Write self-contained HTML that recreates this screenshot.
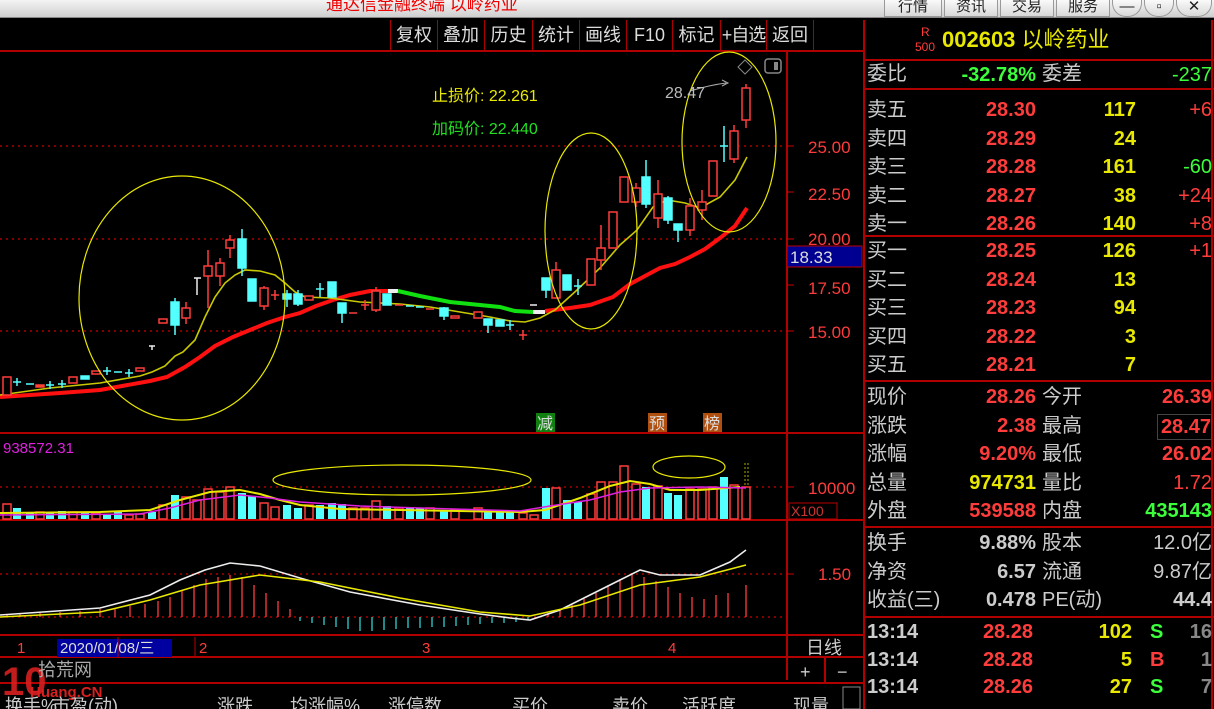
<!DOCTYPE html>
<html style="width:1214px;height:709px;overflow:hidden"><head><meta charset="utf-8"><style>
*{margin:0;padding:0;box-sizing:border-box}
html,body{width:1214px;height:709px;overflow:hidden}
body{background:#000;position:relative;font-family:"Liberation Sans","Noto Sans CJK SC",sans-serif}
.t{position:absolute;white-space:nowrap;line-height:1}
#title{position:absolute;left:0;top:0;width:1214px;height:18px;background:linear-gradient(#f4f4f4,#cfcfcf);border-bottom:1px solid #888}
.tb{position:absolute;top:0;height:17px;border:1px solid #999;border-top:none;background:linear-gradient(#fafafa,#d8d8d8);font-size:15px;color:#222;text-align:center;line-height:14px;overflow:hidden}
.btn{position:absolute;top:20px;height:30px;color:#ddd;font-size:18px;line-height:30px;text-align:center;border-left:1px solid #a00}
.r{color:#ff3c3c}.y{color:#e8e800}.g{color:#3cff3c}.w{color:#ccc}
.rp{position:absolute;font-size:20px;line-height:1}
</style></head><body>
<div id="title"><div class="t" style="left:326px;top:-4px;font-size:17px;color:#e00">通达信金融终端 以岭药业</div>
<div class="tb" style="left:884px;width:58px">行情</div><div class="tb" style="left:944px;width:54px">资讯</div><div class="tb" style="left:1000px;width:54px">交易</div><div class="tb" style="left:1056px;width:54px">服务</div>
<div class="tb" style="left:1112px;width:30px;border-radius:0 0 14px 14px">—</div><div class="tb" style="left:1144px;width:30px;border-radius:0 0 14px 14px">▫</div><div class="tb" style="left:1176px;width:36px;border-radius:0 0 14px 14px">✕</div></div>
<div class="btn" style="left:390px;width:47px">复权</div><div class="btn" style="left:437px;width:47px">叠加</div><div class="btn" style="left:484px;width:48px">历史</div><div class="btn" style="left:532px;width:47px">统计</div><div class="btn" style="left:579px;width:47px">画线</div><div class="btn" style="left:626px;width:46px">F10</div><div class="btn" style="left:672px;width:48px">标记</div><div class="btn" style="left:720px;width:46px;letter-spacing:-1px">+自选</div><div class="btn" style="left:766px;width:48px;border-right:1px solid #a00">返回</div>

<svg style="position:absolute;left:0;top:0" width="1214" height="709">
<g stroke="#b00000" stroke-width="2" fill="none">
<line x1="0" y1="51" x2="865" y2="51"/><line x1="864" y1="20" x2="864" y2="709"/>
<line x1="787" y1="51" x2="787" y2="680"/>
<line x1="0" y1="433" x2="865" y2="433"/><line x1="0" y1="520" x2="865" y2="520"/><line x1="787" y1="520" x2="787" y2="635"/>
<line x1="0" y1="635" x2="865" y2="635"/><line x1="0" y1="657" x2="865" y2="657"/><line x1="0" y1="683" x2="865" y2="683"/>
<line x1="825" y1="657" x2="825" y2="683"/>
<line x1="865" y1="60" x2="1214" y2="60"/><line x1="865" y1="89" x2="1214" y2="89"/><line x1="865" y1="236" x2="1214" y2="236"/><line x1="865" y1="381" x2="1214" y2="381"/><line x1="865" y1="527" x2="1214" y2="527"/><line x1="865" y1="617" x2="1214" y2="617"/>
<line x1="1212" y1="20" x2="1212" y2="709"/>
</g>
<g stroke="#c00" stroke-width="1.3" stroke-dasharray="2,4">
<line x1="0" y1="146" x2="787" y2="146"/><line x1="0" y1="239" x2="787" y2="239"/><line x1="0" y1="331" x2="787" y2="331"/><line x1="0" y1="487" x2="787" y2="487"/><line x1="0" y1="574" x2="787" y2="574"/><line x1="0" y1="617" x2="787" y2="617"/>
</g>
<g stroke="#c00" stroke-width="1"><line x1="787" y1="146" x2="794" y2="146"/><line x1="787" y1="192" x2="794" y2="192"/><line x1="787" y1="239" x2="794" y2="239"/><line x1="787" y1="285" x2="794" y2="285"/><line x1="787" y1="331" x2="794" y2="331"/><line x1="787" y1="487" x2="794" y2="487"/><line x1="787" y1="574" x2="794" y2="574"/></g>
<g fill="#ff3c3c" font-size="17" font-family="Liberation Sans,sans-serif"><text x="808" y="153">25.00</text><text x="808" y="200">22.50</text><text x="808" y="245">20.00</text><text x="808" y="294">17.50</text><text x="808" y="338">15.00</text><text x="808" y="494">10000</text><text x="818" y="580">1.50</text></g>
<rect x="789" y="503" width="48" height="16" fill="none" stroke="#b00" stroke-width="1"/><text x="791" y="516" fill="#c33" font-size="14" font-family="Liberation Sans">X100</text>
<rect x="787" y="246" width="75" height="21" fill="#000090" stroke="#b00"/><text x="790" y="263" fill="#ddd" font-size="17" font-family="Liberation Sans">18.33</text>

<polyline fill="none" stroke="#ff1010" stroke-width="4" points="0,397 60,393 100,390 150,381 167,377 185,367 200,357 215,346 233,337 250,330 267,323 285,317 300,313 316,306 333,300 350,295 370,291 388,291"/>
<polyline fill="none" stroke="#eee" stroke-width="4" points="388,291 398,291"/>
<polyline fill="none" stroke="#10e010" stroke-width="4" points="398,291 420,296 450,302 480,305 500,307 515,311 533,312"/>
<polyline fill="none" stroke="#eee" stroke-width="4" points="533,312 545,312"/>
<polyline fill="none" stroke="#ff1010" stroke-width="4" points="545,311 570,308 590,305 613,297 630,284 645,276 660,268 675,264 690,257 705,249 720,238 735,226 747,208"/>
<polyline fill="none" stroke="#c8c800" stroke-width="1.6" points="0,395 50,388 100,383 140,376 152,372 165,366 175,356 183,352 195,340 205,317 215,297 225,283 235,275 245,270 260,271 275,275 285,283 295,292 305,297 330,298 360,302 400,304 430,307 460,312 490,317 510,321 525,322 540,318 555,310 577,290 600,268 620,245 637,230 653,207 667,200 685,203 700,208 720,197 735,180 747,157"/>

<g stroke="#ff3c3c" stroke-width="1.5" fill="#000">
<rect x="3" y="377" width="8" height="18"/><rect x="36" y="385" width="8" height="2" fill="#f60"/><rect x="69" y="377" width="8" height="6"/><rect x="92" y="371" width="8" height="3"/><rect x="136" y="368" width="8" height="3"/><rect x="159" y="319" width="8" height="4"/>
<line x1="186" y1="302" x2="186" y2="324"/><rect x="182" y="308" width="8" height="10"/>
<line x1="208" y1="250" x2="208" y2="308"/><rect x="204" y="266" width="8" height="10"/>
<line x1="220" y1="258" x2="220" y2="286"/><rect x="216" y="263" width="8" height="13"/>
<line x1="230" y1="235" x2="230" y2="258"/><rect x="226" y="240" width="8" height="8"/>
<line x1="264" y1="286" x2="264" y2="310"/><rect x="260" y="288" width="8" height="18"/>
<line x1="271" y1="295" x2="279" y2="295"/><line x1="275" y1="290" x2="275" y2="300"/>
<rect x="305" y="296" width="8" height="4"/><line x1="349" y1="313" x2="357" y2="313"/><line x1="361" y1="305" x2="369" y2="305"/><line x1="365" y1="300" x2="365" y2="310"/>
<line x1="376" y1="287" x2="376" y2="312"/><rect x="372" y="291" width="8" height="19"/>
<line x1="395" y1="305" x2="403" y2="305"/><line x1="426" y1="309" x2="434" y2="309"/><rect x="451" y="316" width="8" height="2"/><rect x="474" y="312" width="8" height="6"/>
<line x1="519" y1="335" x2="527" y2="335"/><line x1="523" y1="330" x2="523" y2="340"/>
<line x1="556" y1="262" x2="556" y2="298"/><rect x="552" y="270" width="8" height="28"/>
<rect x="587" y="259" width="8" height="26"/><line x1="601" y1="225" x2="601" y2="270"/><rect x="597" y="248" width="8" height="12"/>
<rect x="609" y="212" width="8" height="36"/><rect x="620" y="177" width="8" height="25"/>
<line x1="636" y1="183" x2="636" y2="207"/><rect x="632" y="188" width="8" height="14"/>
<line x1="658" y1="180" x2="658" y2="228"/><rect x="654" y="194" width="8" height="24"/>
<line x1="690" y1="198" x2="690" y2="236"/><rect x="686" y="206" width="8" height="24"/>
<line x1="702" y1="190" x2="702" y2="220"/><rect x="698" y="202" width="8" height="8"/>
<rect x="709" y="161" width="8" height="35"/>
<line x1="734" y1="125" x2="734" y2="163"/><rect x="730" y="131" width="8" height="28"/>
<line x1="746" y1="84" x2="746" y2="128"/><rect x="742" y="88" width="8" height="32"/>
</g>
<g stroke="#54ffff" stroke-width="1.5" fill="#54ffff">
<line x1="13" y1="382" x2="21" y2="382"/><line x1="17" y1="378" x2="17" y2="386"/><line x1="26" y1="384" x2="34" y2="384"/><line x1="46" y1="385" x2="54" y2="385"/><line x1="50" y1="381" x2="50" y2="389"/><line x1="58" y1="384" x2="66" y2="384"/><line x1="62" y1="380" x2="62" y2="388"/>
<rect x="81" y="376" width="8" height="3"/><line x1="103" y1="371" x2="111" y2="371"/><line x1="107" y1="367" x2="107" y2="375"/><line x1="114" y1="372" x2="122" y2="372"/><line x1="125" y1="373" x2="133" y2="373"/><line x1="129" y1="369" x2="129" y2="377"/>
<line x1="175" y1="298" x2="175" y2="335"/><rect x="171" y="302" width="8" height="23"/>
<line x1="242" y1="229" x2="242" y2="276"/><rect x="238" y="239" width="8" height="29"/>
<rect x="248" y="279" width="8" height="22"/>
<line x1="287" y1="290" x2="287" y2="307"/><rect x="283" y="294" width="8" height="5"/>
<line x1="298" y1="290" x2="298" y2="306"/><rect x="294" y="294" width="8" height="10"/>
<line x1="316" y1="289" x2="324" y2="289"/><line x1="320" y1="283" x2="320" y2="297"/>
<rect x="328" y="282" width="8" height="15"/><line x1="342" y1="303" x2="342" y2="323"/><rect x="338" y="303" width="8" height="10"/>
<rect x="383" y="294" width="8" height="11"/><line x1="406" y1="306" x2="414" y2="306"/><line x1="416" y1="307" x2="424" y2="307"/>
<line x1="444" y1="307" x2="444" y2="320"/><rect x="440" y="308" width="8" height="8"/>
<line x1="488" y1="319" x2="488" y2="333"/><rect x="484" y="319" width="8" height="6"/><rect x="496" y="320" width="8" height="6"/><line x1="506" y1="325" x2="514" y2="325"/><line x1="510" y1="320" x2="510" y2="330"/>
<line x1="546" y1="278" x2="546" y2="298"/><rect x="542" y="278" width="8" height="12"/>
<rect x="563" y="275" width="8" height="15"/><line x1="574" y1="286" x2="582" y2="286"/><line x1="578" y1="279" x2="578" y2="295"/>
<line x1="646" y1="160" x2="646" y2="208"/><rect x="642" y="177" width="8" height="27"/>
<line x1="668" y1="196" x2="668" y2="224"/><rect x="664" y="198" width="8" height="22"/>
<line x1="678" y1="224" x2="678" y2="242"/><rect x="674" y="224" width="8" height="6"/>
<line x1="720" y1="146" x2="728" y2="146"/><line x1="724" y1="126" x2="724" y2="162"/>
</g>
<g stroke="#eee" stroke-width="1.5"><line x1="149" y1="346" x2="155" y2="346"/><line x1="152" y1="346" x2="152" y2="350"/><line x1="194" y1="278" x2="201" y2="278"/><line x1="197" y1="278" x2="197" y2="295"/><line x1="530" y1="305" x2="537" y2="305"/></g>

<g fill="none" stroke="#e8e800" stroke-width="1.2">
<ellipse cx="182" cy="298" rx="103" ry="122"/><ellipse cx="591" cy="231" rx="46" ry="98"/><ellipse cx="729" cy="142" rx="47" ry="90"/>
<ellipse cx="402" cy="480" rx="129" ry="15"/><ellipse cx="689" cy="467" rx="36" ry="11"/>
</g>
<path d="M745 60 l7 7 -7 7 -7 -7z" fill="none" stroke="#888"/><rect x="765" y="59" width="16" height="14" rx="3" fill="none" stroke="#888" stroke-width="1.5"/><rect x="774" y="62" width="4" height="8" fill="#888"/>
<path d="M690 91 q20 -6 36 -8 M722 80 l6 3 -6 3" fill="none" stroke="#aaa"/>
<text x="665" y="98" fill="#bbb" font-size="16" font-family="Liberation Sans">28.47</text>
<text x="432" y="101" fill="#e8e800" font-size="16" font-family="Liberation Sans,Noto Sans CJK SC">止损价: 22.261</text>
<text x="432" y="134" fill="#20e020" font-size="16" font-family="Liberation Sans,Noto Sans CJK SC">加码价: 22.440</text>
<rect x="536" y="413" width="19" height="19" fill="#108010"/><text x="537" y="429" fill="#ddd" font-size="16" font-family="Noto Sans CJK SC">减</text>
<rect x="648" y="413" width="19" height="19" fill="#b05010"/><text x="649" y="429" fill="#ddd" font-size="16" font-family="Noto Sans CJK SC">预</text>
<rect x="703" y="413" width="19" height="19" fill="#b05010"/><text x="704" y="429" fill="#ddd" font-size="16" font-family="Noto Sans CJK SC">榜</text>

<text x="3" y="453" fill="#e020e0" font-size="15" font-family="Liberation Sans">938572.31</text>
<g stroke="#ff3c3c" stroke-width="1.5" fill="#000">
<rect x="3" y="504" width="8" height="15"/><rect x="36" y="512" width="8" height="7"/><rect x="69" y="512" width="8" height="7"/><rect x="92" y="513" width="8" height="6"/><rect x="125" y="515" width="8" height="4"/><rect x="136" y="514" width="8" height="5"/><rect x="159" y="505" width="8" height="14"/><rect x="182" y="497" width="8" height="22"/><rect x="193" y="500" width="8" height="19"/><rect x="204" y="489" width="8" height="30"/><rect x="216" y="492" width="8" height="27"/><rect x="226" y="487" width="8" height="32"/><rect x="260" y="503" width="8" height="16"/><rect x="271" y="507" width="8" height="12"/><rect x="305" y="505" width="8" height="14"/><rect x="349" y="508" width="8" height="11"/><rect x="361" y="508" width="8" height="11"/><rect x="372" y="501" width="8" height="18"/><rect x="395" y="508" width="8" height="11"/><rect x="426" y="508" width="8" height="11"/><rect x="451" y="510" width="8" height="9"/><rect x="474" y="508" width="8" height="11"/><rect x="519" y="513" width="8" height="6"/><rect x="530" y="515" width="8" height="4"/><rect x="552" y="488" width="8" height="31"/><rect x="587" y="494" width="8" height="25"/><rect x="597" y="482" width="8" height="37"/><rect x="609" y="482" width="8" height="37"/><rect x="620" y="466" width="8" height="53"/><rect x="632" y="484" width="8" height="35"/><rect x="654" y="486" width="8" height="33"/><rect x="686" y="489" width="8" height="30"/><rect x="698" y="489" width="8" height="30"/><rect x="709" y="487" width="8" height="32"/><rect x="730" y="485" width="8" height="34"/><rect x="742" y="487" width="8" height="32"/>
</g>
<g fill="#54ffff">
<rect x="13" y="508" width="8" height="11"/><rect x="26" y="513" width="8" height="6"/><rect x="46" y="513" width="8" height="6"/><rect x="58" y="511" width="8" height="8"/><rect x="81" y="512" width="8" height="7"/><rect x="103" y="514" width="8" height="5"/><rect x="114" y="512" width="8" height="7"/><rect x="148" y="512" width="8" height="7"/><rect x="171" y="495" width="8" height="24"/><rect x="238" y="493" width="8" height="26"/><rect x="248" y="496" width="8" height="23"/><rect x="283" y="505" width="8" height="14"/><rect x="294" y="508" width="8" height="11"/><rect x="316" y="505" width="8" height="14"/><rect x="328" y="503" width="8" height="16"/><rect x="338" y="504" width="8" height="15"/><rect x="383" y="506" width="8" height="13"/><rect x="406" y="508" width="8" height="11"/><rect x="416" y="508" width="8" height="11"/><rect x="440" y="510" width="8" height="9"/><rect x="484" y="510" width="8" height="9"/><rect x="496" y="510" width="8" height="9"/><rect x="506" y="512" width="8" height="7"/><rect x="542" y="488" width="8" height="31"/><rect x="563" y="500" width="8" height="19"/><rect x="574" y="502" width="8" height="17"/><rect x="642" y="487" width="8" height="32"/><rect x="664" y="493" width="8" height="26"/><rect x="674" y="495" width="8" height="24"/><rect x="720" y="477" width="8" height="42"/>
</g>
<polyline fill="none" stroke="#e8e800" stroke-width="2" points="0,513 100,512 150,510 180,500 210,492 240,490 260,494 280,500 300,505 340,509 400,510 520,512 545,510 580,498 610,486 630,481 650,484 670,490 700,490 740,487"/>
<polyline fill="none" stroke="#e020e0" stroke-width="1.5" points="0,515 140,514 170,508 200,500 240,495 270,498 300,502 360,506 420,508 520,511 550,506 590,500 620,492 650,488 700,487 746,488"/>
<path d="M745 463 v24 M748 463 v24" stroke="#aa0" stroke-dasharray="2,2"/>

<g stroke="#ff3c3c" stroke-width="1.3">
<path d="M7 617v-2M20 617v-3M40 617v-4M60 617v-5M80 617v-6M100 617v-8M115 617v-9M130 617v-11M145 617v-13M158 617v-16M170 617v-20M182 617v-26M194 617v-32M206 617v-38M218 617v-40M230 617v-42M242 617v-40M254 617v-32M266 617v-24M278 617v-16M290 617v-8M548 617v-4M560 617v-8M572 617v-12M584 617v-18M596 617v-24M608 617v-32M620 617v-38M632 617v-44M644 617v-40M656 617v-36M668 617v-30M680 617v-24M692 617v-20M704 617v-18M716 617v-22M728 617v-24M746 617v-32"/>
</g>
<g stroke="#30d0d0" stroke-width="1.3">
<path d="M300 617v4M312 617v6M324 617v8M336 617v10M348 617v12M360 617v14M372 617v14M384 617v13M396 617v12M408 617v11M420 617v11M432 617v10M444 617v10M456 617v9M468 617v8M480 617v7M492 617v6M504 617v6M516 617v5M528 617v3"/>
</g>
<polyline fill="none" stroke="#eee" stroke-width="1.6" points="0,615 100,608 150,595 180,580 205,570 230,563 260,566 300,578 350,592 420,605 480,614 510,618 530,620 560,610 600,590 620,580 640,570 660,575 700,575 730,562 746,550"/>
<polyline fill="none" stroke="#e8e800" stroke-width="1.6" points="0,617 100,612 150,600 200,585 260,575 320,582 400,598 480,612 530,616 580,605 640,585 700,577 746,565"/>

<rect x="57" y="639" width="115" height="18" fill="#0000a0"/>
<text x="60" y="653" fill="#ddd" font-size="15" font-family="Liberation Sans,Noto Sans CJK SC">2020/01/08/三</text>
<g fill="#ff3c3c" font-size="15" font-family="Liberation Sans"><text x="17" y="653">1</text><text x="199" y="653">2</text><text x="422" y="653">3</text><text x="668" y="653">4</text></g>
<line x1="195" y1="637" x2="195" y2="657" stroke="#b00"/><line x1="118" y1="637" x2="118" y2="657" stroke="#b00"/>
<text x="806" y="654" fill="#ccc" font-size="18" font-family="Noto Sans CJK SC">日线</text>
<text x="800" y="678" fill="#ccc" font-size="18" font-family="Liberation Sans">+</text><text x="837" y="678" fill="#ccc" font-size="18" font-family="Liberation Sans">−</text>
<text x="2" y="695" fill="#d82020" font-size="40" font-weight="bold" font-family="Liberation Sans" opacity="0.9">10</text>
<text x="38" y="676" fill="#aaa" font-size="18" font-family="Noto Sans CJK SC">拾荒网</text>
<text x="30" y="697" fill="#d82020" font-size="15" font-weight="bold" font-family="Liberation Sans">Huang.CN</text>
<g fill="#ccc" font-size="18" font-family="Liberation Sans,Noto Sans CJK SC"><text x="5" y="712">换手%</text><text x="52" y="712">市盈(动)</text><text x="217" y="712">涨跌</text><text x="290" y="712">均涨幅%</text><text x="388" y="712">涨停数</text><text x="512" y="712">买价</text><text x="612" y="712">卖价</text><text x="682" y="712">活跃度</text><text x="793" y="712">现量</text></g>
<rect x="843" y="687" width="17" height="22" fill="none" stroke="#888"/>
</svg>

<div class="t" style="left:921px;top:26px;font-size:12px;color:#ff3c3c">R</div>
<div class="t" style="left:915px;top:41px;font-size:12px;color:#ff3c3c">500</div>
<div class="t" style="left:942px;top:29px;font-size:22px;color:#e8e800;font-weight:bold">002603 <span style="font-weight:normal">以岭药业</span></div>
<div class="rp w" style="left:867px;top:64px">委比</div><div class="rp g" style="left:940px;top:65px;width:96px;text-align:right;font-weight:bold">-32.78%</div><div class="rp w" style="left:1042px;top:64px">委差</div><div class="rp g" style="left:1100px;top:65px;width:112px;text-align:right">-237</div>

<div style="position:absolute;left:867px;top:96px;width:345px;font-size:20px;line-height:28.6px">
<div style="position:relative;height:28.6px"><span class="w">卖五</span><b class="r" style="position:absolute;right:176px">28.30</b><b class="y" style="position:absolute;right:76px">117</b><span class="r" style="position:absolute;right:0">+6</span></div>
<div style="position:relative;height:28.6px"><span class="w">卖四</span><b class="r" style="position:absolute;right:176px">28.29</b><b class="y" style="position:absolute;right:76px">24</b></div>
<div style="position:relative;height:28.6px"><span class="w">卖三</span><b class="r" style="position:absolute;right:176px">28.28</b><b class="y" style="position:absolute;right:76px">161</b><span class="g" style="position:absolute;right:0">-60</span></div>
<div style="position:relative;height:28.6px"><span class="w">卖二</span><b class="r" style="position:absolute;right:176px">28.27</b><b class="y" style="position:absolute;right:76px">38</b><span class="r" style="position:absolute;right:0">+24</span></div>
<div style="position:relative;height:28.6px"><span class="w">卖一</span><b class="r" style="position:absolute;right:176px">28.26</b><b class="y" style="position:absolute;right:76px">140</b><span class="r" style="position:absolute;right:0">+8</span></div>
</div>
<div style="position:absolute;left:867px;top:237px;width:345px;font-size:20px;line-height:28.6px">
<div style="position:relative;height:28.6px"><span class="w">买一</span><b class="r" style="position:absolute;right:176px">28.25</b><b class="y" style="position:absolute;right:76px">126</b><span class="r" style="position:absolute;right:0">+1</span></div>
<div style="position:relative;height:28.6px"><span class="w">买二</span><b class="r" style="position:absolute;right:176px">28.24</b><b class="y" style="position:absolute;right:76px">13</b></div>
<div style="position:relative;height:28.6px"><span class="w">买三</span><b class="r" style="position:absolute;right:176px">28.23</b><b class="y" style="position:absolute;right:76px">94</b></div>
<div style="position:relative;height:28.6px"><span class="w">买四</span><b class="r" style="position:absolute;right:176px">28.22</b><b class="y" style="position:absolute;right:76px">3</b></div>
<div style="position:relative;height:28.6px"><span class="w">买五</span><b class="r" style="position:absolute;right:176px">28.21</b><b class="y" style="position:absolute;right:76px">7</b></div>
</div>
<div style="position:absolute;left:867px;top:383px;width:345px;font-size:20px;line-height:28.6px">
<div style="position:relative;height:28.6px"><span class="w">现价</span><b class="r" style="position:absolute;right:176px">28.26</b><span class="w" style="position:absolute;left:175px">今开</span><b class="r" style="position:absolute;right:0">26.39</b></div>
<div style="position:relative;height:28.6px"><span class="w">涨跌</span><b class="r" style="position:absolute;right:176px">2.38</b><span class="w" style="position:absolute;left:175px">最高</span><b class="r" style="position:absolute;right:0;border:1px solid #444;line-height:24px;top:2px;padding-left:3px">28.47</b></div>
<div style="position:relative;height:28.6px"><span class="w">涨幅</span><b class="r" style="position:absolute;right:176px">9.20%</b><span class="w" style="position:absolute;left:175px">最低</span><b class="r" style="position:absolute;right:0">26.02</b></div>
<div style="position:relative;height:28.6px"><span class="w">总量</span><b class="y" style="position:absolute;right:176px">974731</b><span class="w" style="position:absolute;left:175px">量比</span><span class="r" style="position:absolute;right:0">1.72</span></div>
<div style="position:relative;height:28.6px"><span class="w">外盘</span><b class="r" style="position:absolute;right:176px">539588</b><span class="w" style="position:absolute;left:175px">内盘</span><b class="g" style="position:absolute;right:0">435143</b></div>
</div>
<div style="position:absolute;left:867px;top:529px;width:345px;font-size:20px;line-height:28.6px;color:#ccc">
<div style="position:relative;height:28.6px">换手<b style="position:absolute;right:176px">9.88%</b><span style="position:absolute;left:175px">股本</span><span style="position:absolute;right:0">12.0亿</span></div>
<div style="position:relative;height:28.6px">净资<b style="position:absolute;right:176px">6.57</b><span style="position:absolute;left:175px">流通</span><span style="position:absolute;right:0">9.87亿</span></div>
<div style="position:relative;height:28.6px">收益(三)<b style="position:absolute;right:176px">0.478</b><span style="position:absolute;left:175px">PE(动)</span><b style="position:absolute;right:0">44.4</b></div>
</div>
<div style="position:absolute;left:867px;top:619px;width:345px;height:90px;overflow:hidden;font-size:20px;line-height:27.6px;font-weight:bold">
<div style="position:relative;height:27.6px"><span class="w">13:14</span><span class="r" style="position:absolute;right:179px">28.28</span><span class="y" style="position:absolute;right:80px">102</span><span class="g" style="position:absolute;left:283px">S</span><span style="position:absolute;right:0;color:#888">16</span></div>
<div style="position:relative;height:27.6px"><span class="w">13:14</span><span class="r" style="position:absolute;right:179px">28.28</span><span class="y" style="position:absolute;right:80px">5</span><span class="r" style="position:absolute;left:283px">B</span><span style="position:absolute;right:0;color:#888">1</span></div>
<div style="position:relative;height:27.6px"><span class="w">13:14</span><span class="r" style="position:absolute;right:179px">28.26</span><span class="y" style="position:absolute;right:80px">27</span><span class="g" style="position:absolute;left:283px">S</span><span style="position:absolute;right:0;color:#888">7</span></div>
</div>
</body></html>
